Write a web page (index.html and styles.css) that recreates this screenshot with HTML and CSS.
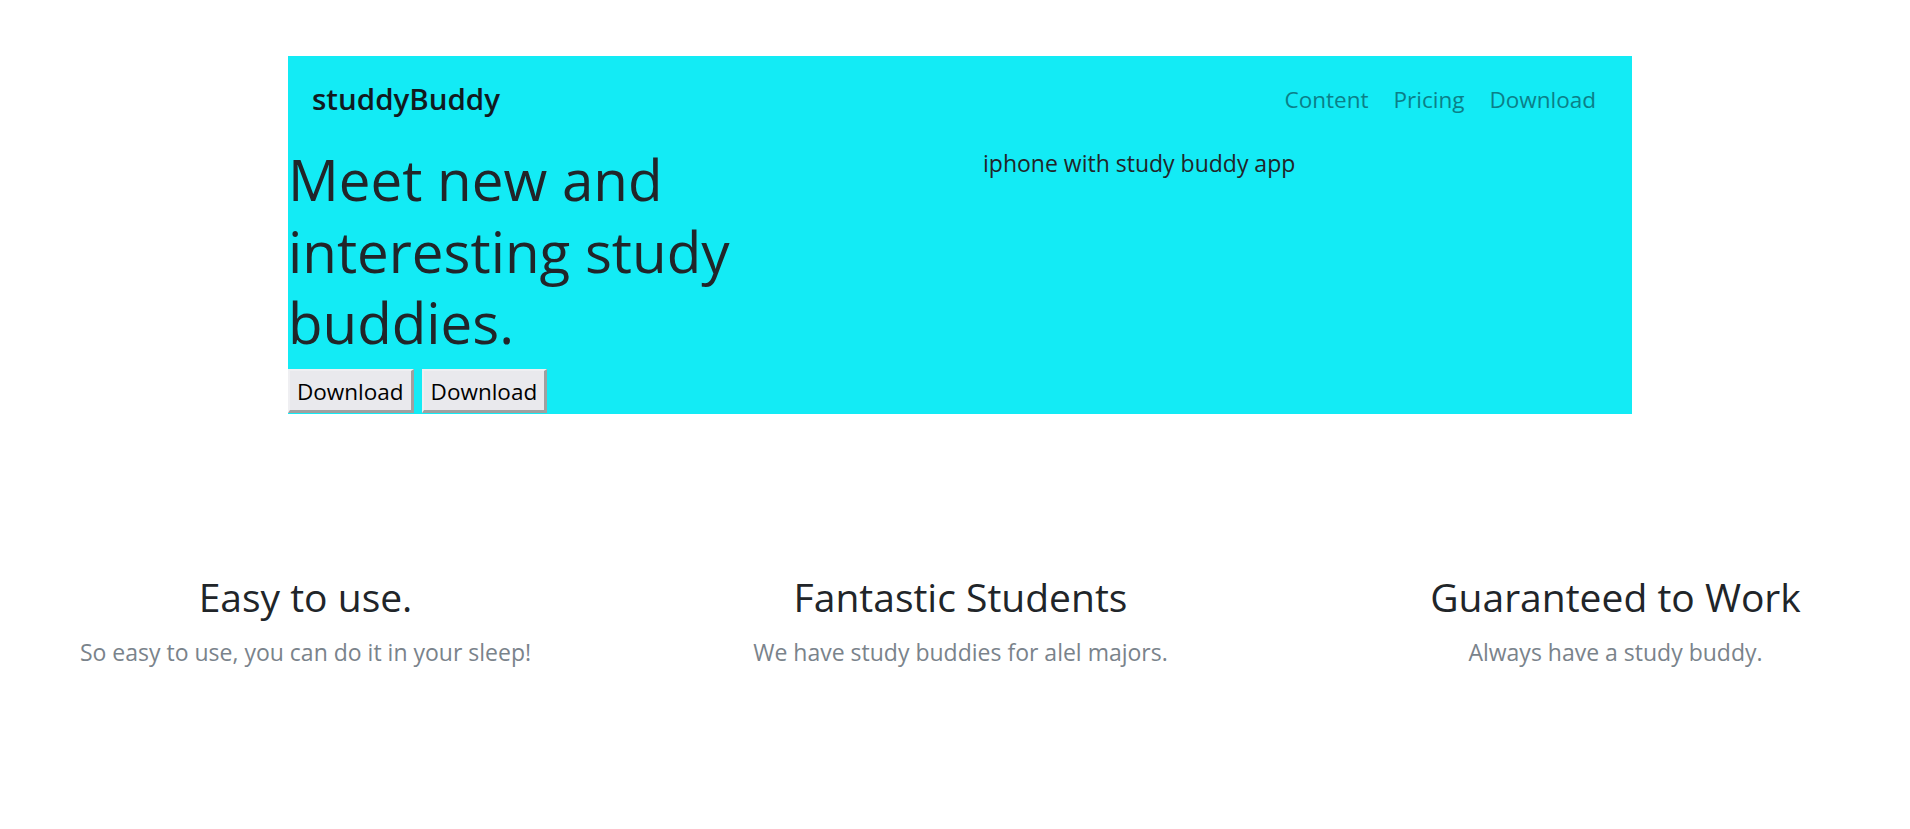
FILE: index.html
```html
<!DOCTYPE html>
<html lang="en">
<head>
<meta charset="utf-8">
<title>studdyBuddy</title>
<link rel="stylesheet" href="styles.css">
</head>
<body>
  <section class="hero">
    <nav class="navbar">
      <a class="brand" href="#">studdyBuddy</a>
      <ul class="nav-links">
        <li><a href="#">Content</a></li>
        <li><a href="#">Pricing</a></li>
        <li><a href="#">Download</a></li>
      </ul>
    </nav>
    <div class="hero-row">
      <div class="hero-text">
        <h1 class="hero-title">Meet new and interesting study buddies.</h1>
        <div class="hero-buttons">
          <button class="btn" type="button">Download</button>
          <button class="btn" type="button">Download</button>
        </div>
      </div>
      <div class="hero-image">
        <span class="alt-text">iphone with study buddy app</span>
      </div>
    </div>
  </section>

  <section class="features">
    <div class="feature">
      <h3 class="feature-title">Easy to use.</h3>
      <p class="feature-text">So easy to use, you can do it in your sleep!</p>
    </div>
    <div class="feature">
      <h3 class="feature-title">Fantastic Students</h3>
      <p class="feature-text">We have study buddies for alel majors.</p>
    </div>
    <div class="feature">
      <h3 class="feature-title">Guaranteed to Work</h3>
      <p class="feature-text">Always have a study buddy.</p>
    </div>
  </section>
</body>
</html>
```

FILE: styles.css
```css
html {
  overflow-x: hidden;
}

body {
  margin: 0;
  font-family: "Open Sans", "Noto Sans", "Liberation Sans", sans-serif;
  font-size: 22.5px;
  line-height: 1.5;
  color: #212529;
  background: #ffffff;
}

.hero {
  margin: 56px 0 0 288px;
  width: 1344px;
  background: #13ebf5;
  padding-bottom: 1px;
}

.navbar {
  display: flex;
  align-items: center;
  justify-content: space-between;
  height: 85px;
  padding: 0 36px 0 24px;
  box-sizing: border-box;
}

.brand {
  font-size: 29.5px;
  font-weight: 600;
  line-height: 1.5;
  color: #111a1f;
  text-decoration: none;
  margin-top: 2px;
}

.nav-links {
  display: flex;
  gap: 25px;
  list-style: none;
  margin: 2px 0 0;
  padding: 0;
}

.nav-links a {
  color: #0b7f88;
  text-decoration: none;
  line-height: 1.5;
}

.hero-row {
  display: flex;
}

.hero-text {
  width: 672px;
}

.hero-title {
  margin: 3px 0 10px;
  max-width: 600px;
  font-size: 56.5px;
  font-weight: 400;
  line-height: 71.5px;
}

.hero-buttons {
  display: flex;
  gap: 8px;
}

.btn {
  font-family: inherit;
  font-size: 22.5px;
  line-height: 27px;
  color: #000;
  background: #e9e9ed;
  padding: 7px 7px 5px;
  border-style: solid;
  border-width: 2px 3px 3px 2px;
  border-color: #efeff2 #a0a0a0 #a0a0a0 #efeff2;
  border-radius: 0;
}

.hero-image {
  flex: 1;
  padding: 5px 0 0 23px;
}

.alt-text {
  font-size: 23px;
  color: #212529;
}

.features {
  display: grid;
  grid-template-columns: repeat(3, 1fr);
  margin: 160px -33px 0 -22px;
  text-align: center;
}

.feature-title {
  margin: 0 0 15px;
  font-size: 39px;
  font-weight: 400;
  line-height: 1.2;
}

.feature-text {
  margin: 0;
  font-size: 23px;
  color: #7a838b;
}
```
